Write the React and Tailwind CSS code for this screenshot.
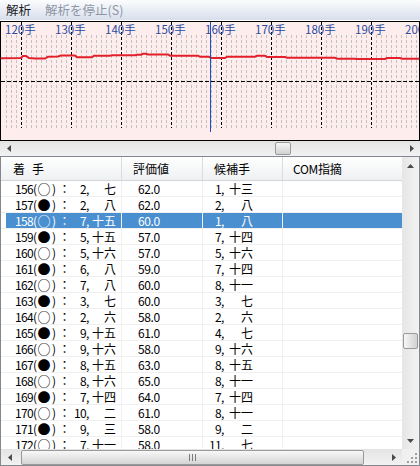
import React from "react";

const rows = [
  [156, "○", "2", "七", "62.0", "1", "十三"],
  [157, "●", "2", "八", "62.0", "2", "八"],
  [158, "○", "7", "十五", "60.0", "1", "八"],
  [159, "●", "5", "十五", "57.0", "7", "十四"],
  [160, "○", "5", "十六", "57.0", "5", "十六"],
  [161, "●", "6", "八", "59.0", "7", "十四"],
  [162, "○", "7", "八", "60.0", "8", "十一"],
  [163, "●", "3", "七", "60.0", "3", "七"],
  [164, "○", "2", "六", "58.0", "2", "六"],
  [165, "●", "9", "十五", "61.0", "4", "七"],
  [166, "○", "9", "十六", "58.0", "9", "十六"],
  [167, "●", "8", "十五", "63.0", "8", "十五"],
  [168, "○", "8", "十六", "65.0", "8", "十一"],
  [169, "●", "7", "十四", "64.0", "7", "十四"],
  [170, "○", "10", "二", "61.0", "8", "十一"],
  [171, "●", "9", "三", "58.0", "9", "二"],
  [172, "○", "7", "十一", "58.0", "11", "七"],
];

// eval line, screen coords
const evalPts = [
  [0, 58.3], [21, 58], [23, 56], [26, 56], [29, 58], [35, 58.5], [45, 58.5],
  [48, 56.7], [58, 56.5], [61, 55.5], [75, 55.5], [77, 57.3], [92, 57.3],
  [94, 55.7], [110, 55.7], [112, 55.3], [135, 55.3], [137, 54.7], [141, 54.7],
  [143, 53.8], [146, 53.8], [148, 54.4], [168, 54.4], [170, 55.7], [198, 55.7],
  [200, 56.7], [209, 56.7], [211, 58], [225, 58], [227, 56.7], [255, 56.7],
  [257, 55.7], [265, 55.7], [267, 57], [285, 57], [287, 57.7], [335, 57.7],
  [337, 58.7], [355, 58.7], [357, 59], [385, 59], [387, 58], [400, 58],
  [402, 58.7], [420, 58.7],
];

function Graph() {
  const minor = [];
  const major = [];
  for (let k = 1; k <= 83; k++) {
    if ((k * 5) % 50 === 20) major.push(k * 5 + 0.5);
    else minor.push(k * 5 + 0.5);
  }
  const pts = evalPts.map(([x, y]) => `${x - 1},${y - 22}`).join(" ");
  return (
    <div className="h-[120px] border border-black bg-[#fdeded] overflow-hidden">
      <svg width="418" height="118" className="block">
        {minor.map((x) => (
          <line key={x} x1={x} x2={x} y1="13" y2="106" stroke="#c2c2c2" strokeDasharray="3 2" />
        ))}
        {major.map((x) => (
          <line key={x} x1={x} x2={x} y1="0" y2="106" stroke="#000" strokeDasharray="3 2" />
        ))}
        <line x1="0" x2="418" y1="59.5" y2="59.5" stroke="#000" strokeDasharray="4 2" />
        {Array.from({ length: 9 }, (_, i) => (
          <text
            key={i}
            x={4 + 50 * i}
            y="11.5"
            fontSize="11.5"
            fill="#2a4a9e"
            fontFamily="'Noto Sans CJK JP', sans-serif"
          >
            {120 + 10 * i}手
          </text>
        ))}
        <polyline points={pts} fill="none" stroke="#e3202a" strokeWidth="2" />
        <line x1="209.5" x2="209.5" y1="0" y2="110" stroke="#1f4fbf" />
      </svg>
    </div>
  );
}

function Tri({ dir }) {
  const d = {
    up: "M0 4 L3.5 0 L7 4Z",
    down: "M0 0 L7 0 L3.5 4Z",
    left: "M4 0 L4 7 L0 3.5Z",
    right: "M0 0 L4 3.5 L0 7Z",
  }[dir];
  const v = dir === "up" || dir === "down";
  return (
    <svg width={v ? 7 : 4} height={v ? 4 : 7}>
      <path d={d} fill="#4a4a4a" />
    </svg>
  );
}

function Row({ r, sel }) {
  const [n, mark, col, row, ev, cc, cr] = r;
  const bg = sel ? "bg-[#4a8fd0]" : "";
  return (
    <div className={`flex h-[16px] shrink-0 border-b border-[#f0f0f0] leading-[15px] ${sel ? "text-white" : "text-black"}`}>
      <div className="w-[121px] shrink-0 flex border-r border-[#f0f0f0]">
        <div className="w-[5px] shrink-0" />
        <div className={`flex-1 flex whitespace-nowrap pl-[9px] ${bg}`}>
          <span className="w-[18px] tracking-[-0.6px]">{n}</span>
          <span className="w-[4px]">(</span>
          <span className="w-[14px] h-[15px] flex items-center justify-center text-[13px] leading-none">{mark}</span>
          <span className="w-[7px] pl-[1px]">)</span>
          <span className="w-[13px] text-center">：</span>
          <span className="w-[15px] text-right tracking-[-0.6px]">{col}</span>
          <span className="w-[5px]">,</span>
          <span className="w-[25px] text-right">{row}</span>
        </div>
      </div>
      <div className={`w-[81px] shrink-0 border-r border-[#f0f0f0] pl-[16px] tracking-[-0.4px] ${bg}`}>{ev}</div>
      <div className={`w-[80px] shrink-0 flex whitespace-nowrap border-r border-[#f0f0f0] ${bg}`}>
        <span className="w-[18px] text-right tracking-[-0.6px]">{cc}</span>
        <span className="w-[6px]">,</span>
        <span className="w-[26px] text-right">{cr}</span>
      </div>
      <div className={`flex-1 ${bg}`} />
    </div>
  );
}

export default function App() {
  return (
    <div className="w-[420px] h-[466px] bg-white overflow-hidden flex flex-col text-[12px] font-['Noto_Sans_CJK_JP',sans-serif]">
      <div className="h-[21px] shrink-0 flex items-center border-b border-white bg-gradient-to-b from-[#fbfcfd] to-[#d8dfec] text-[12.5px]">
        <span className="ml-[6px] text-[#1e1e28]">解析</span>
        <span className="ml-[14px] text-[#8e96a6]">解析を停止(S)</span>
      </div>

      <Graph />

      <div className="h-[15px] shrink-0 flex items-center bg-gradient-to-b from-[#e4e4e4] to-[#f2f2f2]">
        <div className="w-[17px] flex justify-center"><Tri dir="left" /></div>
        <div className="ml-[258px] w-[16px] h-[13px] rounded-[2px] border border-[#9a9a9a] bg-gradient-to-b from-[#f6f6f6] to-[#d2d2d2]" />
        <div className="flex-1" />
        <div className="w-[17px] flex justify-center"><Tri dir="right" /></div>
      </div>

      <div className="h-[310px] shrink-0 border border-[#828790] flex flex-col">
        <div className="flex h-[292px]">
          <div className="flex-1 min-w-0 flex flex-col overflow-hidden">
            <div className="h-[24px] shrink-0 flex border-b border-[#d5d5d5] bg-gradient-to-b from-white to-[#eef0f2] leading-[23px] text-black">
              <div className="w-[121px] shrink-0 border-r border-[#dcdcdc] pl-[12px]">
                <span>着</span><span className="ml-[7px]">手</span>
              </div>
              <div className="w-[81px] shrink-0 border-r border-[#dcdcdc] pl-[11px]">評価値</div>
              <div className="w-[80px] shrink-0 border-r border-[#dcdcdc] pl-[11px]">候補手</div>
              <div className="flex-1 pl-[10px] tracking-[-0.3px]">COM指摘</div>
            </div>
            <div className="flex-1 overflow-hidden flex flex-col">
              {rows.map((r) => (
                <Row key={r[0]} r={r} sel={r[0] === 158} />
              ))}
            </div>
          </div>
          <div className="w-[17px] shrink-0 flex flex-col items-center bg-gradient-to-r from-[#e6e6e6] to-[#f2f2f2]">
            <div className="h-[17px] flex items-center"><Tri dir="up" /></div>
            <div className="mt-[159px] w-[15px] h-[16px] rounded-[2px] border border-[#9a9a9a] bg-gradient-to-r from-[#f6f6f6] to-[#d2d2d2]" />
            <div className="flex-1" />
            <div className="h-[17px] flex items-center"><Tri dir="down" /></div>
          </div>
        </div>
        <div className="flex h-[16px] shrink-0">
          <div className="flex-1 flex items-center bg-gradient-to-b from-[#e4e4e4] to-[#f2f2f2]">
            <div className="w-[17px] flex justify-center"><Tri dir="left" /></div>
            <div className="ml-[3px] w-[343px] h-[15px] rounded-[2px] border border-[#9a9a9a] bg-gradient-to-b from-[#f8f8f8] to-[#d4d4d4] flex items-center justify-center">
              <svg width="7" height="7">
                <path d="M0.5 0 V7 M3.5 0 V7 M6.5 0 V7" stroke="#7a7a7a" />
              </svg>
            </div>
            <div className="flex-1" />
            <div className="w-[17px] flex justify-center"><Tri dir="right" /></div>
          </div>
          <div className="w-[17px] shrink-0 bg-[#f0f0f0] flex items-end justify-end p-[2px]">
            <svg width="11" height="11">
              {[[9, 1], [9, 5], [5, 5], [9, 9], [5, 9], [1, 9]].map(([x, y]) => (
                <rect key={`${x}-${y}`} x={x} y={y} width="2" height="2" fill="#a0a0a0" />
              ))}
            </svg>
          </div>
        </div>
      </div>
    </div>
  );
}
